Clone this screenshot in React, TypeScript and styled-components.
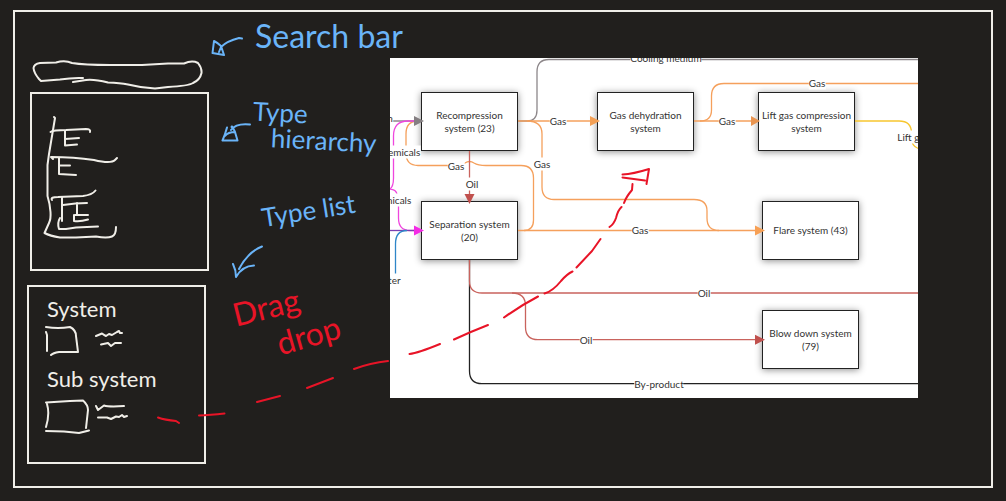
import React from "react";
import styled, { createGlobalStyle } from "styled-components";

const ink = "#f0eee8";
const blue = "#6ab4f8";
const red = "#e81427";

const GlobalStyle = createGlobalStyle`
  * { box-sizing: border-box; }
  body { margin: 0; background: #211f1d; font-family: Lato, "Liberation Sans", sans-serif; }
`;

const Page = styled.main`
  position: relative;
  display: flex;
  min-height: 100vh;
  padding: 10px 13px 13px;
  overflow: hidden;
`;

const Frame = styled.div`
  flex: 1;
  display: flex;
  align-items: flex-start;
  min-width: 0;
  border: 2px solid ${ink};
`;

const Sidebar = styled.aside`
  flex: none;
  display: flex;
  flex-direction: column;
  width: 194px;
  padding: 48px 0 22px 12px;
`;

const SearchField = styled.label`
  position: relative;
  display: block;
  width: 172px;
  height: 32px;
  margin-left: 5px;
`;

const SearchInput = styled.input`
  width: 100%;
  height: 100%;
  padding: 0 16px;
  border: 0;
  outline: 0;
  background: transparent;
  color: ${ink};
  font: 14px Lato, sans-serif;
`;

const Panel = styled.section<{ $indent: number }>`
  width: 179px;
  height: 179px;
  margin-left: ${(p) => p.$indent}px;
  border: 2px solid ${ink};

  & + & { margin-top: 14px; }
`;

const TypeList = styled.div`
  display: flex;
  flex-direction: column;
  padding: 9px 16px;
`;

const TypeTitle = styled.h2`
  margin: 0;
  padding-left: 2px;
  color: ${ink};
  font-size: 22px;
  font-weight: 400;
  line-height: 26px;
`;

const TypeRow = styled.div`
  height: 44px;
`;

const Sketch = styled.svg<{ $color?: string }>`
  display: block;
  flex: none;
  fill: none;
  stroke: ${(p) => p.$color ?? ink};
  stroke-width: 2;
  stroke-linecap: round;
  stroke-linejoin: round;
`;

const SearchOutline = styled(Sketch)`
  position: absolute;
  inset: 0;
  pointer-events: none;
`;

const Notes = styled.div`
  flex: none;
  display: flex;
  flex-direction: column;
  width: 181px;
`;

const Note = styled.div<{ $before: number; $indent: number; $column?: boolean }>`
  display: flex;
  flex-direction: ${(p) => (p.$column ? "column" : "row")};
  align-items: ${(p) => (p.$column ? "flex-start" : "flex-end")};
  margin-top: ${(p) => p.$before}px;
  padding-left: ${(p) => p.$indent}px;
`;

const Writing = styled.span<{ $indent?: number; $tilt?: number; $color?: string }>`
  display: block;
  width: max-content;
  margin-left: ${(p) => p.$indent ?? 0}px;
  color: ${(p) => p.$color ?? blue};
  font-size: 26px;
  line-height: 28px;
  white-space: nowrap;
  transform: rotate(${(p) => p.$tilt ?? 0}deg);
`;

const BigWriting = styled(Writing)`
  font-size: 32px;
`;

const Diagram = styled.section`
  position: relative;
  flex: 1;
  min-width: 0;
  height: 340px;
  margin: 46px 73px 0 0;
  overflow: hidden;
  background: #fff;
`;

const Node = styled.div<{ $x: number; $y: number }>`
  position: absolute;
  left: ${(p) => p.$x}px;
  top: ${(p) => p.$y}px;
  display: flex;
  align-items: center;
  justify-content: center;
  width: 97px;
  height: 59px;
  border: 1px solid #222;
  background: #fff;
  box-shadow: 0 1px 7px rgba(0, 0, 0, 0.45);
  color: #333;
  font-size: 10px;
  line-height: 13px;
  text-align: center;
  white-space: pre;
`;

const Edges = styled.svg`
  position: absolute;
  inset: 0;
  fill: none;
  stroke-width: 1.3;
`;

const EdgeLabel = styled.span<{ $x: number; $y: number }>`
  position: absolute;
  left: ${(p) => p.$x}px;
  top: ${(p) => p.$y}px;
  background: #fff;
  color: #333;
  font-size: 10px;
  line-height: 13px;
  white-space: nowrap;
  transform: translate(-50%, -50%);
`;

const DragTrail = styled(Sketch)`
  position: absolute;
  inset: 0;
  pointer-events: none;
`;

const nodes = [
  { x: 31, y: 34, text: "Recompression\nsystem (23)" },
  { x: 207, y: 34, text: "Gas dehydration\nsystem" },
  { x: 368, y: 34, text: "Lift gas compression\nsystem" },
  { x: 31, y: 143, text: "Separation system\n(20)" },
  { x: 372, y: 143, text: "Flare system (43)" },
  { x: 372, y: 252, text: "Blow down system\n(79)" },
];

const labels = [
  { x: 276, y: 0, text: "Cooling medium" },
  { x: 168, y: 63, text: "Gas" },
  { x: 152, y: 106, text: "Gas" },
  { x: 337, y: 63, text: "Gas" },
  { x: 427, y: 25, text: "Gas" },
  { x: 66, y: 108, text: "Gas" },
  { x: 250, y: 172, text: "Gas" },
  { x: 82, y: 126, text: "Oil" },
  { x: 314, y: 235, text: "Oil" },
  { x: 196, y: 282, text: "Oil" },
  { x: 269, y: 326, text: "By-product" },
  { x: 8, y: 94, text: "Chemicals" },
  { x: -1, y: 142, text: "Chemicals" },
  { x: -3, y: 222, text: "Water" },
  { x: 0, y: 60, text: "n" },
  { x: 523, y: 79, text: "Lift gas" },
];

const orange = "#f5a05c";
const brick = "#c9635d";

const edges: [string, string][] = [
  ["#8d878a", "M128 63H137Q147 63 147 52V14Q147 1.5 159 1.5H3000"],
  [orange, "M128 63H202"],
  [orange, "M137 63Q152 63 152 76V129Q152 141.5 164 141.5H304Q317 141.5 317 153V160Q317 172.5 329 172.5"],
  [orange, "M128 172.5H367"],
  [orange, "M134 172.5Q143.5 172.5 143.5 162V120Q143.5 107.5 131 107.5H96Q88 107.5 84 105Q79.500 102 75 105Q71 107.500 66 107.500H28Q16 107.5 16 95V76Q16 63 28 63"],
  [orange, "M304 63H362"],
  [orange, "M310 63Q321.500 63 321.500 52V38Q321.500 25.500 334 25.500H3000"],
  ["#f7c62f", "M465 63H509Q521.500 63 521.500 75V80Q521.500 91 534 91.500H3000"],
  ["#8d878a", "M0 59H2V63H26"],
  ["#ef46de", "M28 63H18Q3.500 63 3.500 78V120Q3.500 130 -1 131Q6 131 7 136Q8.500 139 8.500 144V160Q8.500 172.500 20 172.500H26"],
  ["#7a3fb0", "M0 172.500H25"],
  ["#2e86c8", "M5.500 216V186Q5.500 172.500 17 172.500"],
  ["#222", "M79.500 202V313Q79.500 325.700 92 325.700H3000"],
  [brick, "M79.500 93V138"],
  [brick, "M79.500 202V223Q79.500 235 92 235H3000"],
  [brick, "M122 235Q135.500 235 135.500 248V269Q135.500 281.700 148 281.700H367"],
];

const heads: [string, string][] = [
  ["#857f82", "M24 58L34 63L24 68Z"],
  ["#f4a055", "M200 58L210 63L200 68Z"],
  ["#e9944f", "M361 58L370 63L361 68Z"],
  ["#f42be5", "M24 167.500L34 172.500L24 177.500Z"],
  ["#f7a055", "M365 167.500L375 172.500L365 177.500Z"],
  ["#c0504d", "M365 276.700L375 281.700L365 286.700Z"],
  ["#c0504d", "M74.500 136L79.500 146L84.500 136Z"],
];

export default function App() {
  return (
    <>
      <GlobalStyle />
      <Page>
        <Frame>
          <Sidebar>
            <SearchField>
              <SearchOutline width="172" height="32" viewBox="32 60 172 32">
                <path d="M83 78Q72 77.500 60 79.500L41 81L39 79Q34 73 33.500 68Q34 64 40 63L56 62.500Q65 60 72 63Q84 65 110 65H142L168 63.500H184Q192 60 198 63Q202 68 201.500 73Q200 80 193 83Q188 86 168 87L155 88.500Q142 88 128 84.500Q120 83 108 82.500Q94 79 86 80L73 82" />
              </SearchOutline>
              <SearchInput type="text" aria-label="Search bar" />
            </SearchField>
            <Panel $indent={3} aria-label="Type hierarchy">
              <Sketch width="175" height="175" viewBox="32 94 175 175">
                <path d="M54 117L55 118L53 130L49 154L47.500 165V196Q50 204 50.500 212Q51 219 49 223L44.500 233Q50 236 60 237.500H76L96 236.500Q107 238.500 112 236.500Q116 235 116 227" />
                <path d="M50.500 132Q53 130 66 130L86 129Q91 129 90 132" />
                <path d="M65 131V145.500L77 144.500M65 139L79 138" />
                <path d="M53 159L51 157Q74 157 94 160Q111 164 115 160L117 158" />
                <path d="M59 158V174L76 175M59 165.500H70" />
                <path d="M52 200Q50 197 58 197L83 196Q92 195 95.500 190.500" />
                <path d="M62 197V221M63 205Q76 203 87 203M77 203V215M75 215H88M74 215V221Q80 222 88 219.500" />
                <path d="M60 218Q57 223 59 229H66L76 227.500L98 226.500" />
              </Sketch>
            </Panel>
            <Panel $indent={0} aria-label="Type list">
              <TypeList>
                <TypeTitle>System</TypeTitle>
                <TypeRow>
                  <Sketch width="90" height="38" viewBox="45 321 90 38">
                    <path d="M46 326Q58 328 70 326Q76 329 76 335L78 351H59Q53 352 51 354M46 331L47 334V350" />
                    <path d="M96 335L102 332.500Q104 334 106 335L109 333L112 334L117 331L119 330L120 332H122M101 343.500L108 342L111 345L115 342H121" />
                  </Sketch>
                </TypeRow>
                <TypeTitle>Sub system</TypeTitle>
                <TypeRow>
                  <Sketch width="90" height="44" viewBox="45 393 90 44">
                    <path d="M46 403.500L70 402L83 401.500Q88 406 88 411L86 429M47 405Q50 415 46 428M46 432L64 432.500L79 434L89 431.500" />
                    <path d="M96 407L98 411L104 406.500Q109 408 124 407M98 418.500H107L111 420L116 417.500L119 418L122 416L124 418L127 417" />
                  </Sketch>
                </TypeRow>
              </TypeList>
            </Panel>
          </Sidebar>

          <Notes>
            <Note $before={10} $indent={2}>
              <Sketch $color={blue} width="44" height="36" viewBox="210 22 44 36">
                <path d="M241 38.500L238 38Q226 41 220 47L218 52M213 41L211.500 53L223 55L220 46Q217 43 213 41" />
              </Sketch>
              <div>
                <BigWriting>Search bar</BigWriting>
                <Sketch width="1" height="8" />
              </div>
            </Note>
            <Note $before={40} $indent={12}>
              <Sketch $color={blue} width="32" height="32" viewBox="221 126 32 32">
                <path d="M250 128.500Q236 127 231 134M227 131.500Q225 139 222.500 144.500H237.500L235 136Q232 129 231.500 131M225 140Q228 136 235 136" />
              </Sketch>
              <div>
                <Writing $tilt={3}>Type</Writing>
                <Writing $indent={18} $tilt={3}>hierarchy</Writing>
              </div>
            </Note>
            <Note $before={42} $indent={20} $column>
              <Writing $indent={32} $tilt={-9}>Type list</Writing>
              <Sketch $color={blue} width="38" height="56" viewBox="227 224 38 56">
                <path d="M260 246.500Q246 252 237 269M231 264Q234 270 234 277Q240 266 252 265.500" />
              </Sketch>
            </Note>
            <Note $before={13} $indent={23} $column>
              <BigWriting $color={red} $tilt={-14}>Drag</BigWriting>
              <BigWriting $color={red} $indent={44} $tilt={-16}>drop</BigWriting>
            </Note>
          </Notes>

          <Diagram aria-label="Process diagram">
            {nodes.map((n) => (
              <Node key={n.text} $x={n.x} $y={n.y}>{n.text}</Node>
            ))}
            <Edges width="100%" height="100%">
              {edges.map(([color, d]) => <path key={d} d={d} stroke={color} />)}
              {heads.map(([color, d]) => <path key={d} d={d} fill={color} />)}
            </Edges>
            {labels.map((l) => (
              <EdgeLabel key={`${l.x}-${l.y}`} $x={l.x} $y={l.y}>{l.text}</EdgeLabel>
            ))}
          </Diagram>
        </Frame>

        <DragTrail $color={red} width="100%" height="100%">
          <path d="M158 417.500Q165 420 176 421L179 423M199 415.500Q210 415 224.500 413.500M257 402L280 396M307 388Q320 383 333 378M354 369Q370 363 388 361M409.500 354Q418 353 440 344M454 339.500Q470 332 488 325M504 317.500Q520 306 538 296.500M544.500 293.500Q553 291 561 281Q567 274 572.500 271.500M576.500 267.500L592 251L600.500 239M609.500 227Q614 224 616 218Q618 210 621.500 207M624 203Q626 197 632 190L632.500 184" />
          <path d="M622.500 174.500Q633 174 649 169L646.500 184M622.500 177.500L645 180.500" />
        </DragTrail>
      </Page>
    </>
  );
}
